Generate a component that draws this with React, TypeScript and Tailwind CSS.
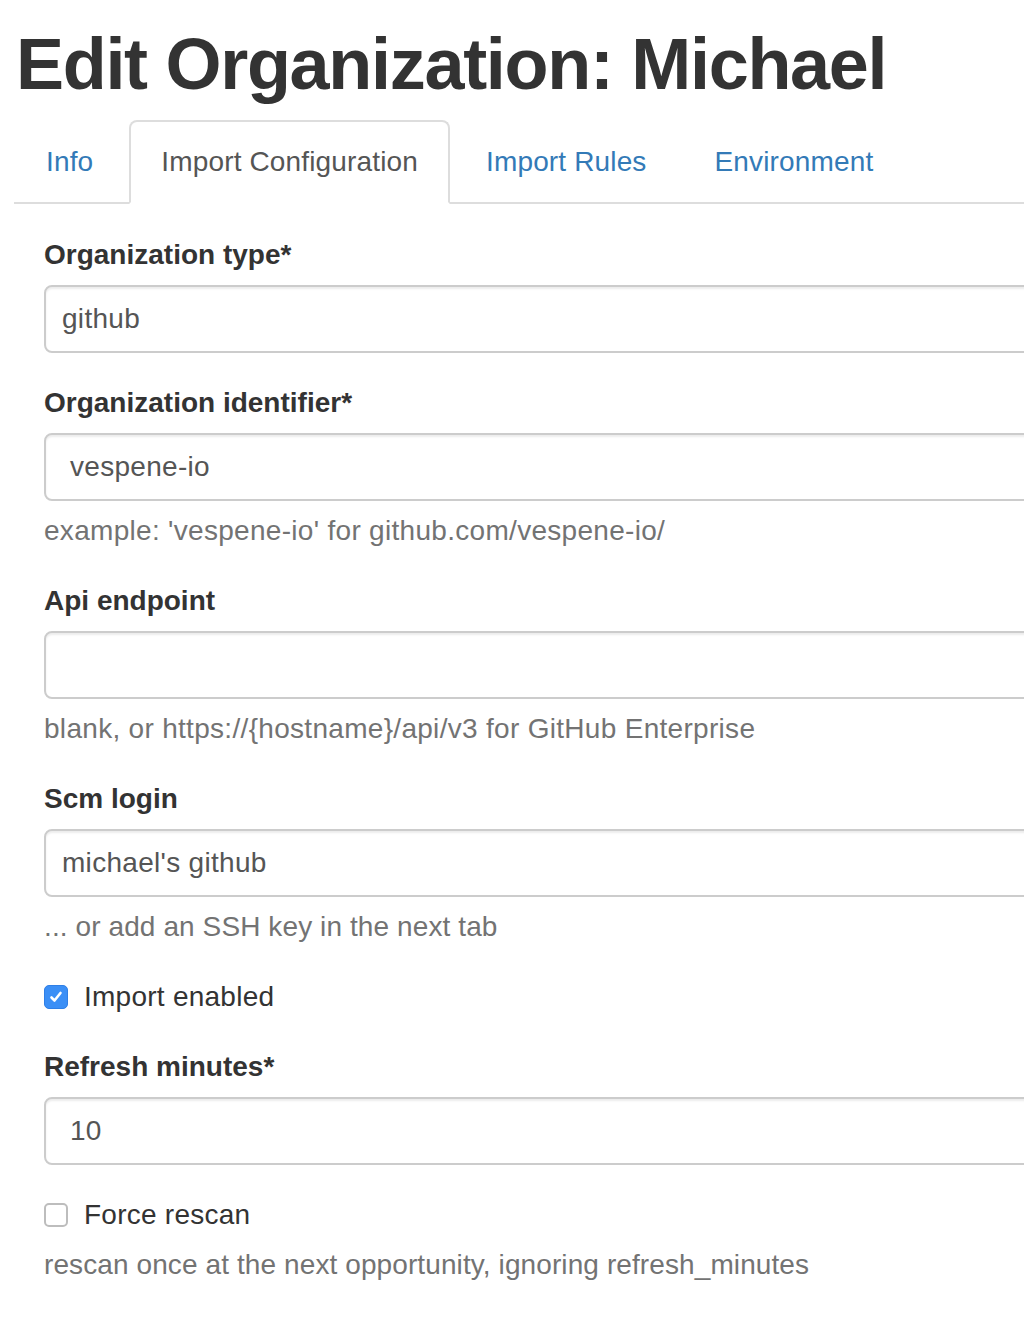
import React from "react";

const font = { fontFamily: '"Liberation Sans", Arial, Helvetica, sans-serif' };

function Label({ children }: { children: React.ReactNode }) {
  return <div className="text-[28px] leading-[40px] font-bold text-[#333] mb-[10px]">{children}</div>;
}

function Field({ value, pad }: { value?: string; pad: "select" | "input" }) {
  return (
    <div
      className={`h-[68px] w-[1100px] border-2 border-[#ccc] rounded-[8px] shadow-[inset_0_2px_2px_rgba(0,0,0,0.075)] flex items-center text-[28px] tracking-[0.3px] text-[#555] ${
        pad === "select" ? "pl-[16px]" : "pl-[24px]"
      }`}
    >
      {value}
    </div>
  );
}

function Help({ children, tight }: { children: React.ReactNode; tight?: boolean }) {
  return (
    <div className={`mt-[10px] text-[28px] leading-[40px] text-[#737373] ${tight ? "tracking-[0.1px]" : "tracking-[0.3px]"}`}>
      {children}
    </div>
  );
}

function Checkbox({ checked, label }: { checked: boolean; label: string }) {
  return (
    <div className="flex items-center h-[40px] text-[28px] tracking-[0.25px] text-[#333]">
      {checked ? (
        <div className="w-[24px] h-[24px] rounded-[5px] bg-[#3b8ff6] border border-[#2f7fe6] flex items-center justify-center">
          <svg width="16" height="16" viewBox="0 0 16 16">
            <path d="M3.5 8.5 L6.5 11.5 L12.5 4" fill="none" stroke="white" strokeWidth="2.6" strokeLinecap="round" strokeLinejoin="round" />
          </svg>
        </div>
      ) : (
        <div className="w-[24px] h-[24px] rounded-[5px] bg-white border-2 border-[#bdbdbd]" />
      )}
      <span className="ml-[16px]">{label}</span>
    </div>
  );
}

export default function App() {
  const tabs = ["Info", "Import Configuration", "Import Rules", "Environment"];
  return (
    <div className="w-[1024px] h-[1320px] overflow-hidden bg-white" style={font}>
      <div className="pl-[16px] pt-[24px]">
        <h1 className="text-[72px] leading-[80px] font-bold text-[#333] tracking-[-1.3px]">Edit Organization: Michael</h1>
      </div>
      <div className="ml-[14px] mt-[16px] flex border-b-2 border-[#ddd]">
        {tabs.map((t, i) => {
          const active = i === 1;
          return (
            <div
              key={t}
              className={`-mb-[2px] mr-[4px] px-[30px] py-[20px] leading-[40px] text-[28px] tracking-[0.15px] border-2 rounded-t-[8px] ${
                active ? "border-[#ddd] border-b-white bg-white text-[#555]" : "border-transparent text-[#337ab7]"
              }`}
            >
              {t}
            </div>
          );
        })}
      </div>
      <div className="pl-[44px] pt-[31px]">
        <Label>Organization type*</Label>
        <Field value="github" pad="select" />

        <div className="mt-[30px]">
          <Label>Organization identifier*</Label>
          <Field value="vespene-io" pad="input" />
          <Help>example: 'vespene-io' for github.com/vespene-io/</Help>
        </div>

        <div className="mt-[30px]">
          <Label>Api endpoint</Label>
          <Field pad="input" />
          <Help>blank, or https://{"{hostname}"}/api/v3 for GitHub Enterprise</Help>
        </div>

        <div className="mt-[30px]">
          <Label>Scm login</Label>
          <Field value="michael's github" pad="select" />
          <Help tight>... or add an SSH key in the next tab</Help>
        </div>

        <div className="mt-[30px]">
          <Checkbox checked label="Import enabled" />
        </div>

        <div className="mt-[30px]">
          <Label>Refresh minutes*</Label>
          <Field value="10" pad="input" />
        </div>

        <div className="mt-[30px]">
          <Checkbox checked={false} label="Force rescan" />
          <Help tight>rescan once at the next opportunity, ignoring refresh_minutes</Help>
        </div>
      </div>
    </div>
  );
}
